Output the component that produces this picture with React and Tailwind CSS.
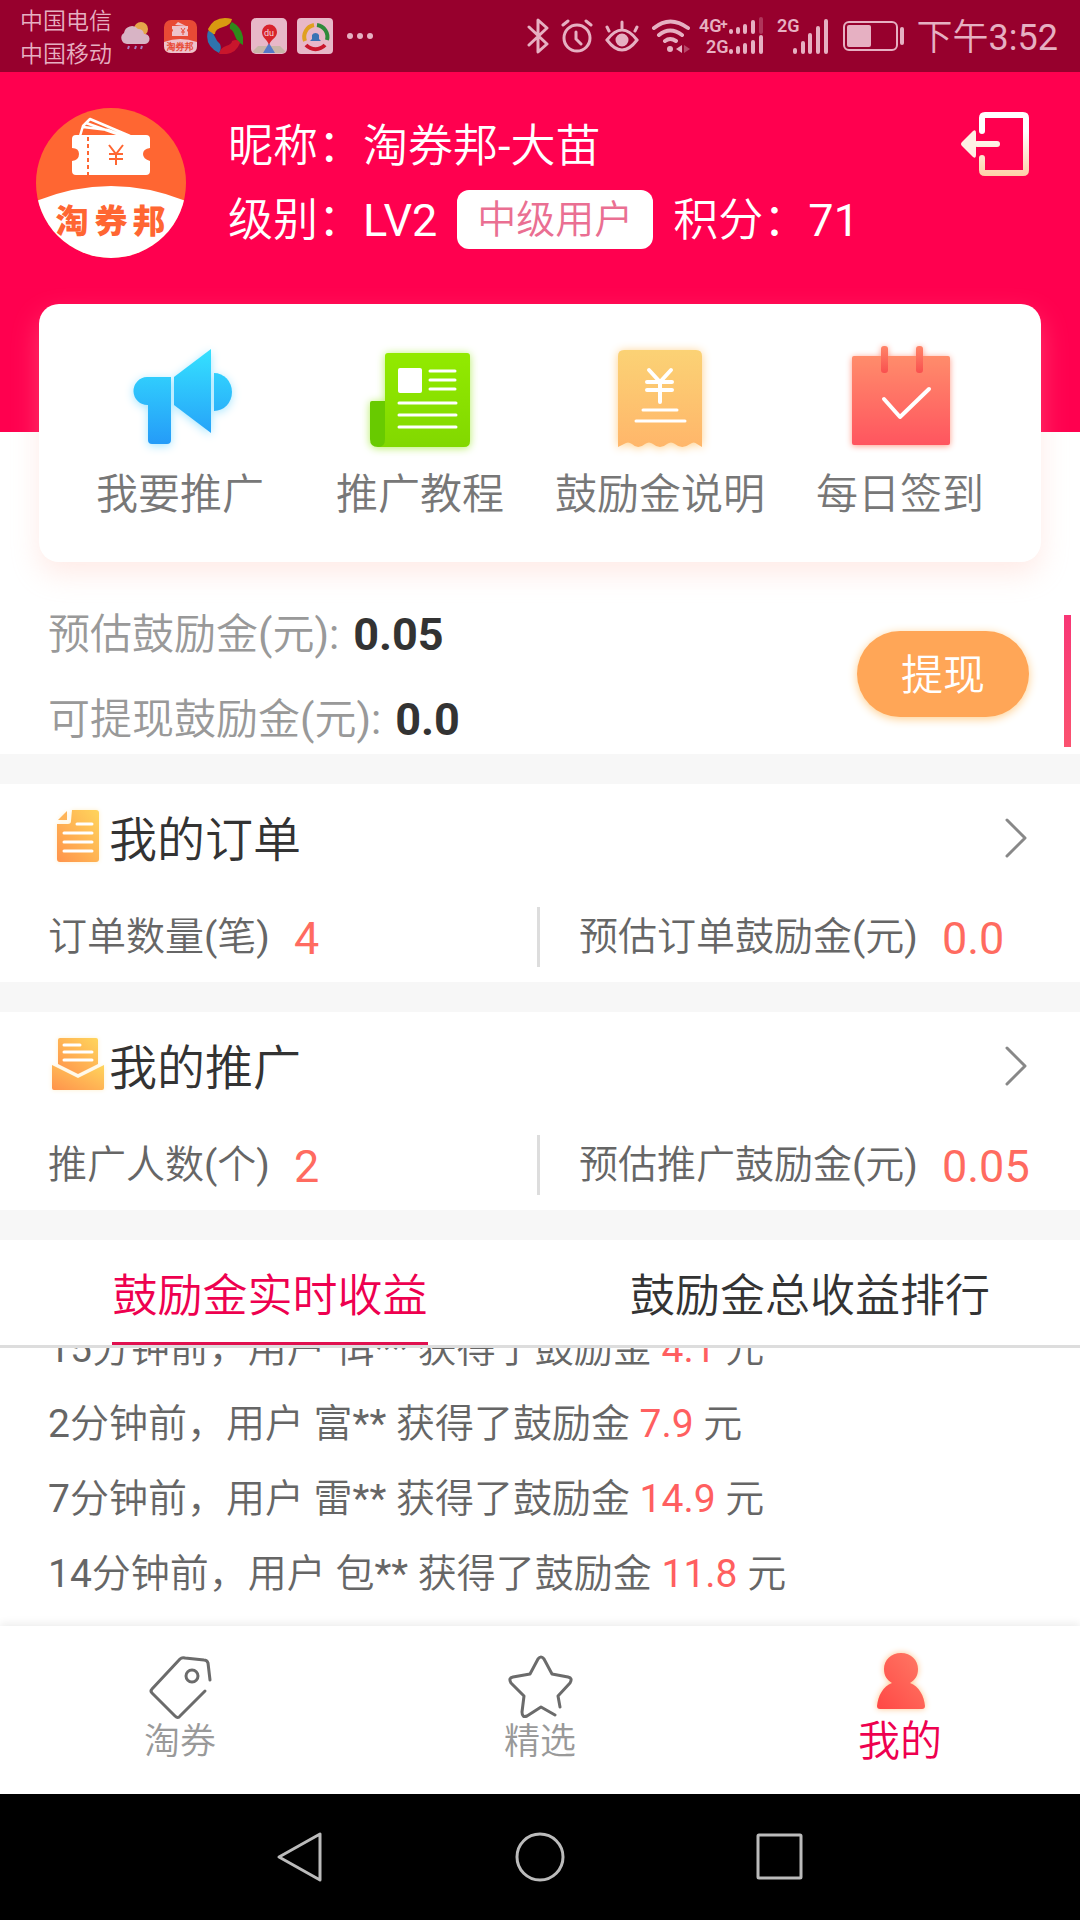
import { useState } from 'react';

const actions = [
    { label: '我要推广', Icon: MegaphoneIcon },
    { label: '推广教程', Icon: NewsIcon },
    { label: '鼓励金说明', Icon: ReceiptIcon },
    { label: '每日签到', Icon: CalendarIcon },
];

const incomes = [
    { time: '15分钟前', user: '佴**', amount: '4.1' },
    { time: '2分钟前', user: '富**', amount: '7.9' },
    { time: '7分钟前', user: '雷**', amount: '14.9' },
    { time: '14分钟前', user: '包**', amount: '11.8' },
];

const tabs = ['鼓励金实时收益', '鼓励金总收益排行'];

const navItems = [
    { label: '淘券', Icon: TagIcon },
    { label: '精选', Icon: StarIcon },
    { label: '我的', Icon: PersonIcon },
];

function Logo({ className }) {
    return (
        <svg viewBox="0 0 150 150" className={className} aria-label="淘券邦">
            <defs>
                <clipPath id="logoClip"><circle cx="75" cy="75" r="75" /></clipPath>
            </defs>
            <g clipPath="url(#logoClip)">
                <rect width="150" height="150" fill="#ff6632" />
                <path d="M0 93Q75 63 150 93V150H0Z" fill="#fff" />
                <path d="M44 28L47 18L54 11L94 28M47 19L72 22L88 28M50 15L84 27" fill="none" stroke="#fff" strokeWidth="2.5" strokeLinejoin="round" />
                <path d="M40 27H110Q114 27 114 31V40Q107 41 107 46T114 53V63Q114 67 110 67H40Q36 67 36 63V53Q43 52 43 46T36 40V31Q36 27 40 27Z" fill="#fff" />
                <path d="M52 29V67" stroke="#ff6632" strokeWidth="2" strokeDasharray="4 3" />
                <path d="M73 37L80 46L87 37M80 46V57M73 46H87M73 51H87" fill="none" stroke="#ff6632" strokeWidth="2" />
            </g>
            <g fill="#ff6632" fontSize="33" fontWeight="900" textAnchor="middle" fontFamily="Noto Sans CJK SC, sans-serif">
                <text x="36" y="125">淘</text>
                <text x="75" y="125">券</text>
                <text x="113" y="125">邦</text>
            </g>
        </svg>
    );
}

function MegaphoneIcon() {
    return (
        <svg viewBox="0 0 120 120" className="size-[120px] drop-shadow-[0_2px_5px_#a5e6ff]">
            <defs>
                <linearGradient id="blue" x1="0" y1="13" x2="0" y2="108" gradientUnits="userSpaceOnUse">
                    <stop stopColor="#35e2ff" />
                    <stop offset="1" stopColor="#259cf8" />
                </linearGradient>
            </defs>
            <g fill="url(#blue)">
                <path d="M27 42H51V105Q51 109 47 109H32Q28 109 28 105V70A14 14 0 0 1 27 42Z" />
                <path d="M54 42L91 14V98L54 70Z" />
                <path d="M94 38A18 19 0 0 1 94 76Z" />
            </g>
        </svg>
    );
}

function NewsIcon() {
    return (
        <svg viewBox="0 0 120 120" className="size-[120px] drop-shadow-[0_1px_4px_#b5ee60]">
            <defs>
                <linearGradient id="green" x1="0" y1="0" x2="0" y2="1">
                    <stop stopColor="#92ea00" />
                    <stop offset="1" stopColor="#82d800" />
                </linearGradient>
            </defs>
            <path d="M28 18H107Q110 18 110 21V106Q110 112 104 112H18L25 100V21Q25 18 28 18Z" fill="url(#green)" />
            <path d="M12 66H25V104Q25 112 18 112Q10 112 10 104V68Q10 66 12 66Z" fill="#68ca00" />
            <rect x="38" y="33" width="24" height="25" rx="2" fill="#fff" />
            <path d="M70 36H95M70 45H95M70 54H95M39 68H96M39 80H96M39 92H96" stroke="#fff" strokeWidth="3" strokeLinecap="round" />
        </svg>
    );
}

function ReceiptIcon() {
    return (
        <svg viewBox="0 0 120 120" className="size-[120px] drop-shadow-[0_1px_5px_#ffd08a]">
            <defs>
                <linearGradient id="orange" x1="0" y1="0" x2="0" y2="1">
                    <stop stopColor="#fbd275" />
                    <stop offset="1" stopColor="#ffb66a" />
                </linearGradient>
            </defs>
            <path d="M24 15H96Q102 15 102 21V112L97 109Q94 106 90 109Q82 115 75 109Q71 106 67 109Q60 115 53 109Q49 106 45 109Q38 115 32 109Q28 106 24 109L18 112V21Q18 15 24 15Z" fill="url(#orange)" />
            <path d="M49 35L60 47L71 35M60 47V67M47 47H72M47 55H72" fill="none" stroke="#fff" strokeWidth="4" strokeLinecap="round" />
            <path d="M43 75H77M36 86H85" stroke="#fff" strokeWidth="3" strokeLinecap="round" />
        </svg>
    );
}

function CalendarIcon() {
    return (
        <svg viewBox="0 0 120 120" className="size-[120px] drop-shadow-[0_1px_3px_#ff9a86]">
            <defs>
                <linearGradient id="red" x1="0" y1="0" x2="0" y2="1">
                    <stop stopColor="#ff8c6b" />
                    <stop offset="1" stopColor="#ff555f" />
                </linearGradient>
                <linearGradient id="pin" x1="0" y1="0" x2="0" y2="1">
                    <stop stopColor="#ff8468" />
                    <stop offset="1" stopColor="#f9504f" />
                </linearGradient>
            </defs>
            <rect x="12" y="21" width="98" height="89" rx="2" fill="url(#red)" />
            <rect x="41" y="11" width="7" height="27" rx="3" fill="url(#pin)" />
            <rect x="76" y="11" width="7" height="27" rx="3" fill="url(#pin)" />
            <path d="M44 64L60 82L89 54" fill="none" stroke="#fff" strokeWidth="4" strokeLinecap="round" strokeLinejoin="round" />
        </svg>
    );
}

function TagIcon() {
    return (
        <svg viewBox="0 0 66 66" className="size-[66px]" fill="none" stroke="#6b6b6b" strokeWidth="3" strokeLinecap="round" strokeLinejoin="round">
            <path d="M63 26L61 9Q60 6 57 6L38 4Q35 3 33 5L5 35Q3 37 5 39L28 62Q31 65 33 62L58 37" />
            <circle cx="45" cy="22" r="6" />
        </svg>
    );
}

function StarIcon() {
    return (
        <svg viewBox="0 0 66 66" className="size-[66px]" fill="none" stroke="#6b6b6b" strokeWidth="3" strokeLinecap="round" strokeLinejoin="round">
            <path d="M53 53L51 42L63 29Q66 24 61 23L45 20L37 5Q34 1 31 5L23 20L6 23Q1 24 4 29L17 42L15 58Q15 64 20 62L34 53L48 61" />
        </svg>
    );
}

function PersonIcon() {
    return (
        <svg viewBox="0 4 66 66" className="size-[66px] overflow-visible drop-shadow-[0_0_3px_#ffc48a]">
            <defs>
                <linearGradient id="person" x1="1" y1="0" x2="0" y2="1">
                    <stop stopColor="#ff7b66" />
                    <stop offset="1" stopColor="#ff4745" />
                </linearGradient>
            </defs>
            <path d="M34 3C44 3 51 10 51 19C51 26 48 30 43 33C52 36 57 46 58 56Q58 59 55 59H13Q10 59 10 56C11 46 16 36 25 33C20 30 17 26 17 19C17 10 24 3 34 3Z" fill="url(#person)" />
        </svg>
    );
}

function OrderIcon() {
    return (
        <svg viewBox="0 0 56 60" className="h-[60px] w-[56px] drop-shadow-[0_0_2px_#fff0cc]">
            <defs>
                <linearGradient id="doc" x1="1" y1="0" x2="0" y2="1">
                    <stop stopColor="#ffd55c" />
                    <stop offset="1" stopColor="#ff934c" />
                </linearGradient>
            </defs>
            <path d="M23 2H47Q50 2 50 5V51Q50 54 47 54H11Q8 54 8 51V16H19Q22 16 22 13Z" fill="url(#doc)" />
            <path d="M18 3V12H9Z" fill="#ffb457" />
            <path d="M28 16H43M15 25H43M15 34H43M15 43H43" stroke="#fff" strokeWidth="3" strokeLinecap="round" />
        </svg>
    );
}

function PromoIcon() {
    return (
        <svg viewBox="0 0 56 60" className="h-[60px] w-[56px] drop-shadow-[0_0_2px_#fff0cc]">
            <path d="M11 2H47Q49 2 49 4V28L29 38L9 28V4Q9 2 11 2Z" fill="url(#doc)" />
            <path d="M3 29L29 42L55 29V52Q55 54 53 54H5Q3 54 3 52Z" fill="url(#doc)" />
            <path d="M15 9H31M15 16H43M15 24H43" stroke="#fff" strokeWidth="3" strokeLinecap="round" />
        </svg>
    );
}

function StatusBar() {
    return (
        <div className="flex h-[72px] items-center justify-between bg-[#97002d] pl-5 pr-[22px] text-[#e6b0c2]">
            <div className="flex items-center">
                <div className="pt-1 text-[23px] leading-[33px]">
                    <div>中国电信</div>
                    <div>中国移动</div>
                </div>
                <svg viewBox="0 0 30 30" className="ml-2 size-[30px]">
                    <circle cx="21" cy="8" r="7" fill="#e5a54b" />
                    <path d="M7 23A6 6 0 0 1 4 12A8 8 0 0 1 18 8A6 6 0 0 1 24 13A5 5 0 0 1 25 23Z" fill="#d8b4c5" />
                    <path d="M9 25L8 28M16 25L15 28M22 25L21 28" stroke="#a77fc0" strokeWidth="2" />
                </svg>
                <svg viewBox="0 0 33 33" className="ml-3.5 size-[33px]">
                    <rect width="33" height="33" rx="7" fill="#e84a35" />
                    <path d="M0 22Q16 16 33 22V26Q33 33 26 33H7Q0 33 0 26Z" fill="#eec3cb" />
                    <path d="M11 5L14 2L22 6M8 6H24V9Q22 10 24 12V16H8V12Q10 10 8 9Z" fill="#eec3cb" />
                    <path d="M17 8L19 11L21 8M19 11V15M17 12H21" stroke="#e84a35" fill="none" />
                    <text x="16" y="30" fontSize="9" fontWeight="700" textAnchor="middle" fill="#e84a35">淘券邦</text>
                </svg>
                <svg viewBox="0 0 36 36" className="ml-2.5 size-[36px]">
                    <path d="M1 11Q8-3 25 1Q24 7 16 9T8 16Q3 17 1 11Z" fill="#d99a10" />
                    <path d="M25 4Q38 11 36 27Q30 24 28 18T23 11Q22 6 25 4Z" fill="#2f8a1b" />
                    <path d="M33 25Q28 38 12 36Q13 30 19 28T25 23Q31 20 33 25Z" fill="#c9162c" />
                    <path d="M12 35Q-3 27 1 13Q6 14 8 19T13 26Q15 31 12 35Z" fill="#2f74ae" />
                </svg>
                <svg viewBox="0 0 36 36" className="ml-2 size-[36px]">
                    <rect width="36" height="36" rx="5" fill="#e8b8c8" />
                    <path d="M2 33L7 28H29L34 33Q34 35 31 35H5Q2 35 2 33Z" fill="#c8b6a8" />
                    <path d="M18 25L24 35H12Z" fill="#5579c8" />
                    <path d="M18 27C16 21 11 20 11 14A7 7 0 0 1 26 14C26 20 20 21 18 27Z" fill="#d8232c" />
                    <text x="18" y="18" fontSize="9" textAnchor="middle" fill="#f4d6de">du</text>
                </svg>
                <svg viewBox="0 0 36 36" className="ml-2.5 size-[36px]">
                    <rect width="36" height="36" rx="4" fill="#e8b8c8" />
                    <g fill="none" strokeWidth="4">
                        <path d="M8 23A12 12 0 0 1 17 7" stroke="#e0a020" />
                        <path d="M20 7A12 12 0 0 1 30 22" stroke="#2f8a3b" />
                        <path d="M28 27A13 13 0 0 1 9 27" stroke="#c9162c" />
                    </g>
                    <path d="M13 23L15 21V17A4 4 0 0 1 22 17V21L24 23Z" fill="#3a74b4" />
                </svg>
                <svg viewBox="0 0 26 8" className="ml-3.5 h-2 w-[26px]" fill="currentColor">
                    <circle cx="3" cy="4" r="3" />
                    <circle cx="13" cy="4" r="3" />
                    <circle cx="23" cy="4" r="3" />
                </svg>
            </div>
            <div className="flex items-center">
                <svg viewBox="0 0 22 36" className="h-9 w-[22px]" fill="none" stroke="currentColor" strokeWidth="3" strokeLinejoin="round" strokeLinecap="round">
                    <path d="M2 9L20 26L11 34V2L20 10L2 27" />
                </svg>
                <svg viewBox="0 0 32 36" className="ml-3 h-9 w-[32px]" fill="none" stroke="currentColor" strokeWidth="3" strokeLinecap="round">
                    <circle cx="16" cy="20" r="13" />
                    <path d="M15 14V21L20 26M2 7L7 3M30 7L25 3" />
                </svg>
                <svg viewBox="0 0 34 36" className="ml-3 h-9 w-[34px]" fill="none" stroke="currentColor" strokeWidth="3" strokeLinecap="round">
                    <path d="M2 22Q17 2 32 22Q17 42 2 22ZM17 10V4M4 13L2 9M30 13L32 9" />
                    <circle cx="17" cy="22" r="5" fill="currentColor" />
                </svg>
                <svg viewBox="0 0 40 36" className="ml-3 h-9 w-10" fill="none" stroke="currentColor" strokeWidth="4" strokeLinecap="round">
                    <path d="M3 10Q19-3 37 10M8 17Q19 8 31 17M14 23Q19 19 25 23" />
                    <circle cx="19" cy="31" r="3" fill="currentColor" stroke="none" />
                    <path d="M31 27V35L25 31Z" fill="currentColor" stroke="none" />
                    <path d="M33 27V35L39 31Z" fill="currentColor" stroke="none" opacity=".4" />
                </svg>
                <svg viewBox="0 0 66 44" className="ml-2 h-11 w-[66px]" fill="currentColor" fontFamily="Roboto, sans-serif" fontSize="18" fontWeight="600">
                    <text x="0" y="18">4G</text>
                    <text x="21" y="15" fontSize="14">+</text>
                    <text x="7" y="39">2G</text>
                    <path d="M32 17V18M39 15V18M46 12V18M54 8V18M32 37V38M39 34V38M46 31V38M54 28V38M62 23V38" stroke="currentColor" strokeWidth="4" strokeLinecap="round" />
                    <path d="M62 5V18" stroke="currentColor" strokeWidth="4" strokeLinecap="round" opacity=".3" />
                </svg>
                <svg viewBox="0 0 52 44" className="ml-3 h-11 w-[52px]" fill="currentColor" fontFamily="Roboto, sans-serif" fontSize="18" fontWeight="600">
                    <text x="0" y="18">2G</text>
                    <path d="M18 36V38M26 29V38M33 21V38M41 14V38M49 7V38" stroke="currentColor" strokeWidth="4" strokeLinecap="round" />
                </svg>
                <svg viewBox="0 0 62 30" className="ml-3.5 h-[30px] w-[62px]">
                    <rect x="1" y="1" width="53" height="28" rx="5" fill="none" stroke="currentColor" strokeWidth="2" />
                    <rect x="4" y="4" width="24" height="22" rx="2" fill="currentColor" />
                    <rect x="57" y="6" width="4" height="18" rx="2" fill="currentColor" />
                </svg>
                <span className="ml-3 pt-1 text-[36px] leading-[40px]">下午3:52</span>
            </div>
        </div>
    );
}

function StatCard({ title, Icon, left, right }) {
    return (
        <section className="border-b-[30px] border-[#f7f7f7]">
            <a href="#" className="flex h-[108px] items-center pl-[49px] pr-[51px]">
                <Icon />
                <h2 className="ml-1 flex-1 pt-1.5 text-[48px] leading-[60px] text-[#333]">{title}</h2>
                <svg viewBox="0 0 24 40" className="h-10 w-6" fill="none" stroke="#888" strokeWidth="3" strokeLinecap="round" strokeLinejoin="round">
                    <path d="M2 2L20 20L2 38" />
                </svg>
            </a>
            <div className="grid h-[90px] grid-cols-2 items-center text-[39px] leading-[60px] text-[#666]">
                <p className="flex h-[60px] items-center border-r-[3px] border-[#ddd] pl-12">
                    {left.label}
                    <span className="ml-6 pt-1 text-[45px] text-[#ff6b60]">{left.value}</span>
                </p>
                <p className="flex h-[60px] items-center pl-[39px]">
                    {right.label}
                    <span className="ml-6 pt-1 text-[45px] text-[#ff6b60]">{right.value}</span>
                </p>
            </div>
        </section>
    );
}

export default function App() {
    const [tab, setTab] = useState(0);
    const [nav, setNav] = useState(2);

    return (
        <div className="flex min-h-screen flex-col bg-white font-['Roboto','Noto_Sans_CJK_SC_DemiLight','Noto_Sans_CJK_SC_Light','Noto_Sans_CJK_SC',sans-serif]">
            <StatusBar />

            <header className="flex h-[360px] items-start bg-[#ff004f] pl-9 pr-[51px] pt-9 text-[45px] text-white">
                <Logo className="size-[150px] shrink-0" />
                <div className="ml-[42px] flex-1 pt-0.5 leading-[74px]">
                    <p>昵称：淘券邦-大苗</p>
                    <div className="flex items-center">
                        <span>级别：LV2</span>
                        <span className="mx-5 mb-1 rounded-xl bg-white px-5 pt-0.5 text-[39px] leading-[57px] text-[#ea6f92]">中级用户</span>
                        <span>积分：71</span>
                    </div>
                </div>
                <button aria-label="退出" className="mt-1">
                    <svg viewBox="0 0 68 64" className="h-16 w-[68px]">
                        <defs>
                            <linearGradient id="exit" x1="0" y1="0" x2="0" y2="64" gradientUnits="userSpaceOnUse">
                                <stop offset=".3" stopColor="#fff" />
                                <stop offset="1" stopColor="#ffd0a8" />
                            </linearGradient>
                        </defs>
                        <path d="M21 19V6Q21 3 24 3H62Q65 3 65 6V58Q65 61 62 61H24Q21 61 21 58V46M16 32H36" fill="none" stroke="url(#exit)" strokeWidth="6" strokeLinecap="round" />
                        <path d="M1 30L12 19Q15 17 15 21V43Q15 47 12 45L1 34Q-1 32 1 30Z" fill="#fff0e4" />
                    </svg>
                </button>
            </header>

            <nav className="mx-[39px] -mt-32 grid h-[258px] grid-cols-4 rounded-[20px] bg-white px-[21px] pt-[31px] shadow-[0_12px_28px_rgba(255,190,175,0.3)]">
                {actions.map(({ label, Icon }) => (
                    <a key={label} href="#" className="flex flex-col items-center whitespace-nowrap text-[42px] leading-[60px] text-[#777]">
                        <Icon />
                        <span className="mt-2.5">{label}</span>
                    </a>
                ))}
            </nav>

            <section className="relative flex items-center justify-between border-b-[30px] border-[#f7f7f7] pb-1 pl-12 pr-[51px] pt-[43px]">
                <div className="flex flex-col gap-[25px] text-[42px] leading-[60px] text-[#999]">
                    <p className="flex h-[60px] items-center gap-3.5">预估鼓励金(元): <b className="text-[45px] text-[#333]">0.05</b></p>
                    <p className="flex h-[60px] items-center gap-3.5">可提现鼓励金(元): <b className="text-[45px] text-[#333]">0.0</b></p>
                </div>
                <button className="mb-2 h-[86px] w-[172px] rounded-full bg-[#ffa657] pt-1 text-[42px] text-white shadow-[0_2px_10px_#ffcf8e]">
                    提现
                </button>
                {/* scroll thumb */}
                <div className="absolute right-[9px] top-[53px] h-[132px] w-[7px] bg-linear-to-b from-[#f83676] to-[#fb5270]" />
            </section>

            <StatCard
                title="我的订单"
                Icon={OrderIcon}
                left={{ label: '订单数量(笔)', value: '4' }}
                right={{ label: '预估订单鼓励金(元)', value: '0.0' }}
            />
            <StatCard
                title="我的推广"
                Icon={PromoIcon}
                left={{ label: '推广人数(个)', value: '2' }}
                right={{ label: '预估推广鼓励金(元)', value: '0.05' }}
            />

            <div className="grid grid-cols-2 justify-items-center border-b-[3px] border-[#ddd] text-[45px]">
                {tabs.map((name, i) => (
                    <button
                        key={name}
                        onClick={() => setTab(i)}
                        className={
                            tab === i
                                ? 'h-[105px] border-b-[3px] border-[#e0104f] pt-3 text-[#ee004f]'
                                : 'h-[105px] border-b-[3px] border-transparent pt-3 text-[#333]'
                        }
                    >
                        {name}
                    </button>
                ))}
            </div>

            <ul className="flex min-h-[278px] flex-1 basis-0 flex-col justify-end overflow-hidden pb-3.5 pl-12 text-[39px] leading-[75px] text-[#666]">
                {incomes.map(({ time, user, amount }) => (
                    <li key={time} className="h-[75px] shrink-0">
                        {time}，用户 {user} 获得了鼓励金 <span className="text-[#ff5f60]">{amount}</span> 元
                    </li>
                ))}
            </ul>

            <nav className="grid h-[168px] grid-cols-3 pt-7 shadow-[0_-3px_8px_#eee]">
                {navItems.map(({ label, Icon }, i) => (
                    <button key={label} onClick={() => setNav(i)} className="flex flex-col items-center">
                        <Icon />
                        <span
                            className={
                                nav === i
                                    ? 'text-[42px] leading-[44px] text-[#ee004f]'
                                    : 'text-[36px] leading-[44px] text-[#999]'
                            }
                        >
                            {label}
                        </span>
                    </button>
                ))}
            </nav>

            <div className="grid h-[126px] grid-cols-3 place-items-center bg-black px-[180px]">
                <button aria-label="返回">
                    <svg viewBox="0 0 50 54" className="h-[54px] w-[50px]" fill="none" stroke="#bbb" strokeWidth="3" strokeLinejoin="round">
                        <path d="M45 4V50L4 27Z" />
                    </svg>
                </button>
                <button aria-label="主页">
                    <svg viewBox="0 0 54 54" className="size-[54px]" fill="none" stroke="#bbb" strokeWidth="3">
                        <circle cx="27" cy="27" r="23" />
                    </svg>
                </button>
                <button aria-label="最近任务">
                    <svg viewBox="0 0 54 54" className="size-[54px]" fill="none" stroke="#bbb" strokeWidth="3" strokeLinejoin="round">
                        <rect x="5" y="5" width="43" height="43" rx="1" />
                    </svg>
                </button>
            </div>
        </div>
    );
}
